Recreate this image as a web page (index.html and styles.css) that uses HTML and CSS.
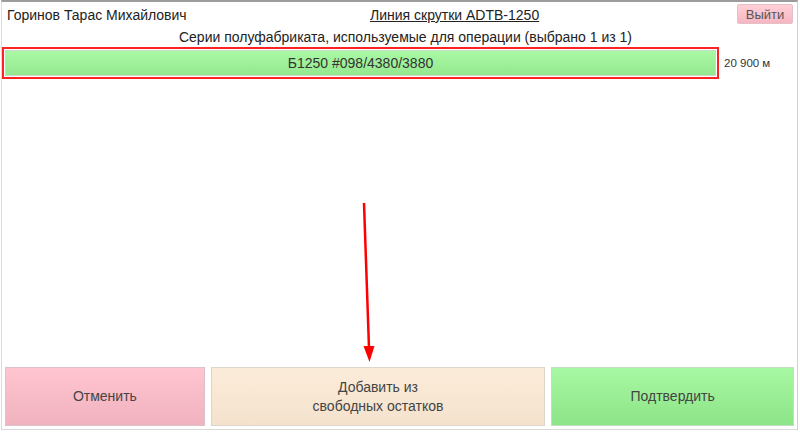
FILE: index.html
```html
<!DOCTYPE html>
<html lang="ru">
<head>
<meta charset="utf-8">
<link rel="stylesheet" href="styles.css">
</head>
<body>
<div class="frame">
  <div class="header">
    <div class="user">Горинов Тарас Михайлович</div>
    <div class="line-title">Линия скрутки ADTB-1250</div>
    <div class="spacer"></div>
    <button class="btn-exit">Выйти</button>
  </div>
  <div class="subtitle">Серии полуфабриката, используемые для операции (выбрано 1 из 1)</div>
  <div class="series-row">
    <div class="series-sel">
      <div class="series-bar">Б1250 #098/4380/3880</div>
    </div>
    <div class="series-len">20 900 м</div>
  </div>
  <div class="actions">
    <button class="act act-cancel">Отменить</button>
    <button class="act act-add">Добавить из<br>свободных остатков</button>
    <button class="act act-ok">Подтвердить</button>
  </div>
  <svg class="arrow" width="30" height="170" viewBox="0 0 30 170">
    <line x1="10" y1="10" x2="15" y2="155" stroke="#f00" stroke-width="2.5"/>
    <polygon points="9.5,153 20.5,153 15.5,169" fill="#f00"/>
  </svg>
</div>
</body>
</html>
```

FILE: styles.css
```css
html, body {
  margin: 0;
  padding: 0;
  background: #fff;
}
body {
  font-family: "Liberation Sans", Arial, sans-serif;
  color: #333;
  font-size: 14px;
}
.frame {
  position: relative;
  margin-left: 1px;
  width: 797px;
  height: 430px;
  box-sizing: border-box;
  border-top: 2px solid #9c9c9c;
  border-left: 1px solid #dcdcdc;
  border-right: 1px solid #d0d0d0;
  border-bottom: 1px solid #d8d8d8;
  display: flex;
  flex-direction: column;
}
.header {
  display: flex;
  align-items: center;
  height: 26px;
  padding-left: 5px;
  padding-right: 4px;
}
.user {
  flex: 0 0 363px;
  color: #222;
}
.line-title {
  text-decoration: underline;
  color: #222;
}
.spacer { flex: 1; }
.btn-exit {
  align-self: flex-start;
  margin-top: 2px;
  width: 56px;
  height: 20px;
  padding: 0;
  font-family: inherit;
  font-size: 13px;
  color: #555;
  background: linear-gradient(#ffd0d8, #f5b6c2);
  border: 1px solid #e5c0c6;
  border-radius: 2px;
}
.subtitle {
  height: 19px;
  line-height: 19px;
  text-align: center;
  padding-left: 12px;
  color: #222;
}
.series-row {
  display: flex;
  align-items: center;
  height: 32px;
}
.series-sel {
  width: 717px;
  height: 32px;
  box-sizing: border-box;
  border: 2px solid #f22;
  padding: 1px;
}
.series-bar {
  height: 100%;
  box-sizing: border-box;
  border: 1px solid #c9dcc6;
  background: linear-gradient(#aaf8a5, #94e88e);
  text-align: center;
  line-height: 24px;
  color: #333;
}
.series-len {
  margin-left: 5px;
  font-size: 11.5px;
  color: #333;
}
.actions {
  margin-top: auto;
  display: flex;
  gap: 6px;
  padding: 0 3px 3px 3px;
  height: 59px;
}
.act {
  height: 59px;
  box-sizing: border-box;
  border: 1px solid #d6d0cc;
  font-family: inherit;
  font-size: 14px;
  color: #444;
  line-height: 19px;
  padding: 0;
}
.act-cancel {
  width: 200px;
  background: linear-gradient(#ffc5d0, #f0b2bf);
  border-color: #dcc2c6;
}
.act-add {
  width: 335px;
  background: linear-gradient(#fbecd9, #f4e2cd);
  border-color: #ddd6cc;
}
.act-ok {
  width: 243px;
  background: linear-gradient(#a8f8a3, #8de487);
  border-color: #c6dcc3;
}
.arrow {
  position: absolute;
  left: 352px;
  top: 191px;
}
```
